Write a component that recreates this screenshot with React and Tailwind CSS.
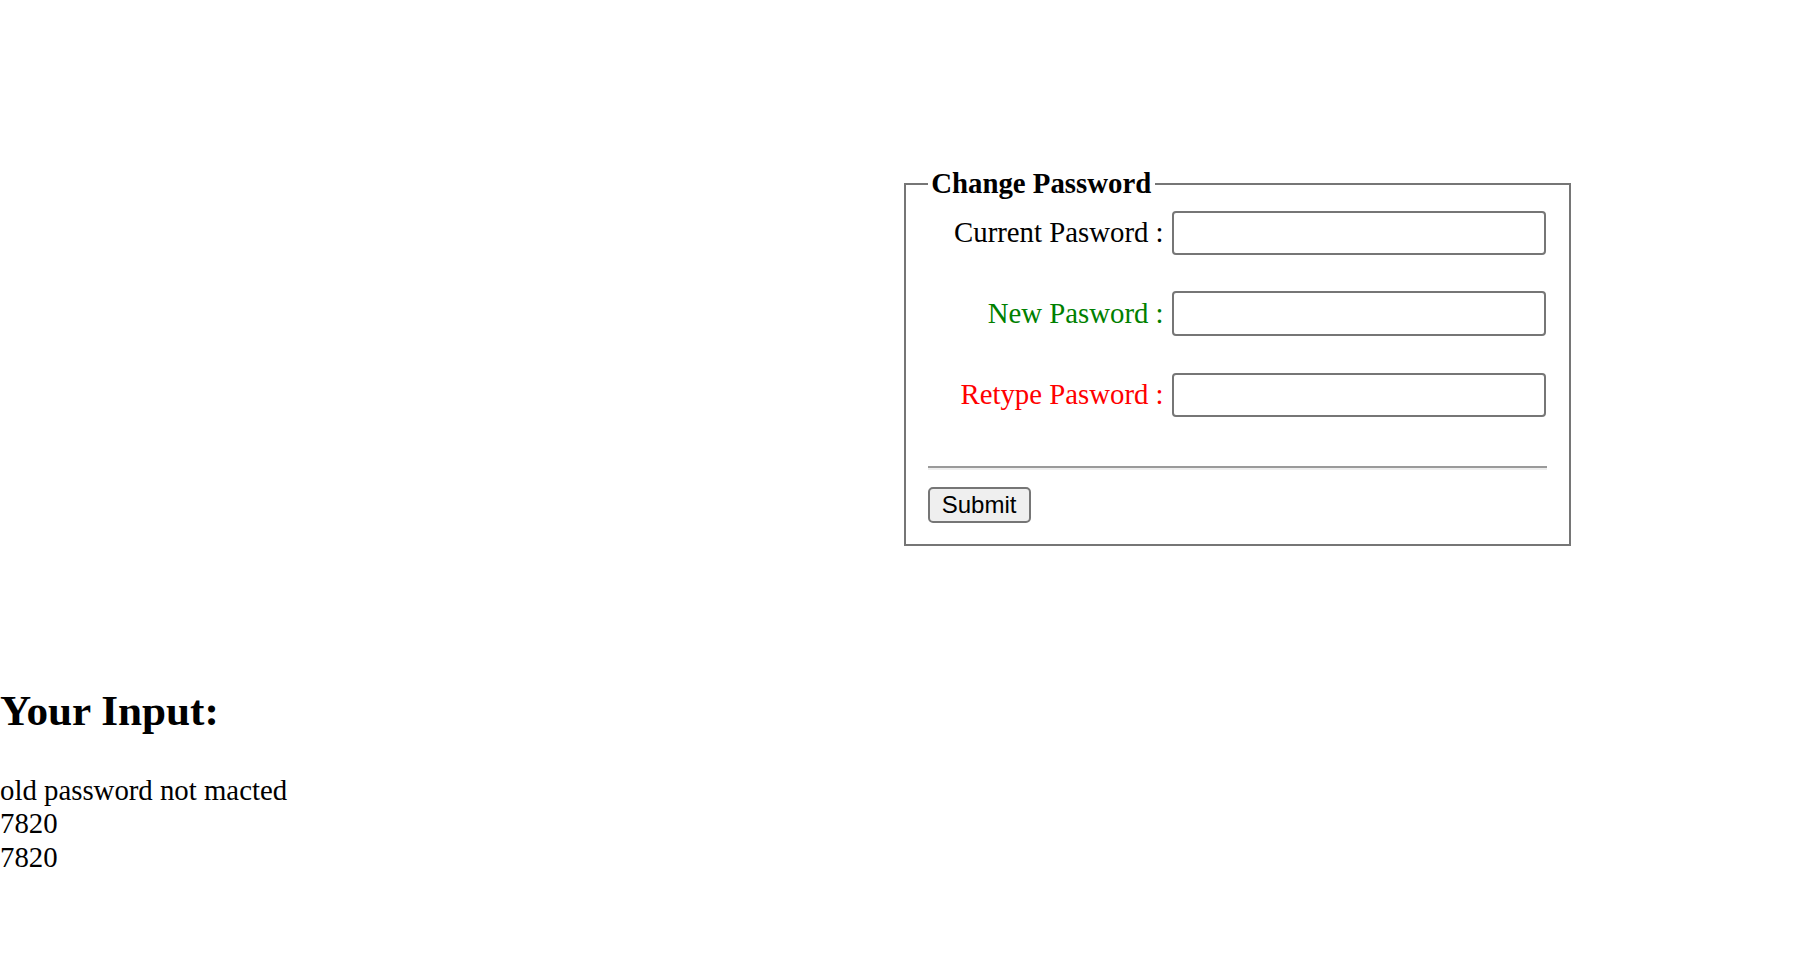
export default function App() {
  const serif = "font-['Liberation_Serif','Times_New_Roman',serif]";
  return (
    <div className={`min-h-screen w-full bg-white text-black ${serif} text-[28.8px] leading-[33.1px]`}>
      <div className="pt-[167px] pl-[904px]">
        <fieldset className="m-0 w-[667px] border-2 border-[#767676] px-[21.6px] pt-0 pb-[21px]">
          <legend className="px-[3.6px] font-bold leading-[33px]">Change Password</legend>
          <div className="mt-[11px] flex items-center gap-[8px]">
            <label className="w-[236px] text-right">Current Pasword :</label>
            <input type="password" className="h-[44px] w-[374px] rounded-[4px] border-2 border-[#767676] bg-white" />
          </div>
          <div className="mt-[36px] flex items-center gap-[8px]">
            <label className="w-[236px] text-right text-[#008000]">New Pasword :</label>
            <input type="password" className="h-[45px] w-[374px] rounded-[4px] border-2 border-[#767676] bg-white" />
          </div>
          <div className="mt-[37px] flex items-center gap-[8px]">
            <label className="w-[236px] text-right text-[#ff0000]">Retype Pasword :</label>
            <input type="password" className="h-[44px] w-[374px] rounded-[4px] border-2 border-[#767676] bg-white" />
          </div>
          <hr className="mt-[49px] h-0 border-t-2 border-b-2 border-t-[#9a9a9a] border-b-[#eeeeee]" />
          <button
            type="button"
            className="mt-[17px] block h-[36px] w-[103px] rounded-[5px] border-2 border-[#767676] bg-[#efefef] pb-[1px] font-['Liberation_Sans',Arial,sans-serif] text-[24px] leading-[28px] text-black"
          >
            Submit
          </button>
        </fieldset>
      </div>
      <h2 className="mt-[140px] text-[43.2px] font-bold leading-[49.6px]">Your Input:</h2>
      <div className="mt-[38px] leading-[33.6px]">
        <div>old password not macted</div>
        <div>7820</div>
        <div>7820</div>
      </div>
    </div>
  );
}
